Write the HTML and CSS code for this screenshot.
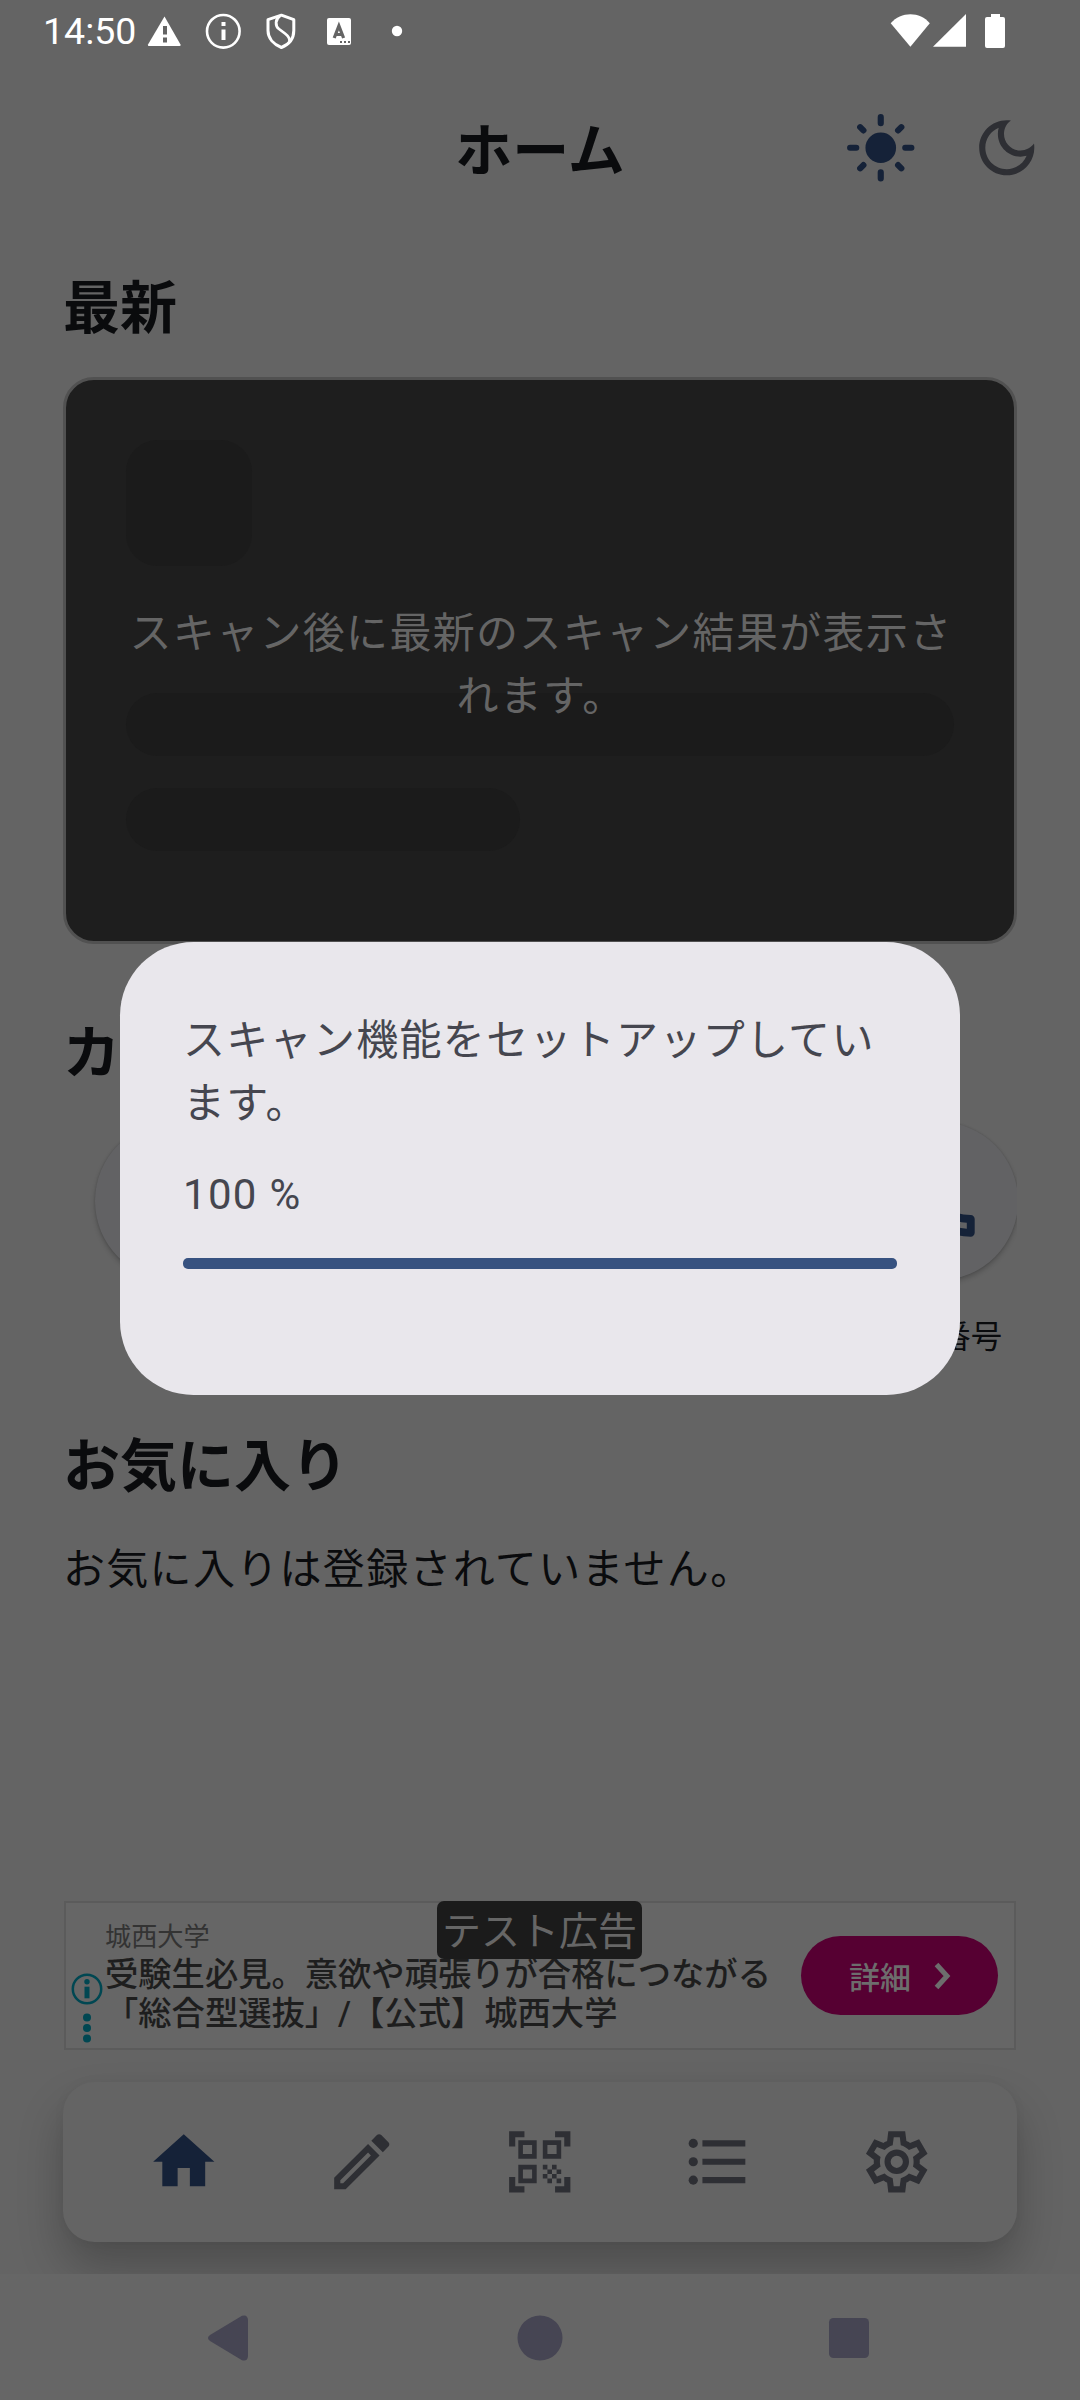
FILE: index.html
```html
<!DOCTYPE html>
<html lang="ja">
<head>
<meta charset="utf-8">
<title>ホーム</title>
<link rel="stylesheet" href="styles.css">
</head>
<body>
<div class="screen">
  <div class="status">
    <span class="clock">14:50</span>
    <svg class="status-left" width="264" height="62" viewBox="0 0 264 62">
      <path d="M20.500 16.500L36.500 44.500Q37 46 35.500 46H5Q3.500 46 4 44.500Z" fill="#fff"/>
      <path d="M19 26h4v8.500h-4zM19 37.500h4v5h-4z" fill="#646464"/>
      <circle cx="79.300" cy="31.300" r="16.300" fill="none" stroke="#fff" stroke-width="2.600"/>
      <path d="M77.500 22h4v4h-4zM77.500 29.500h4v10.500h-4z" fill="#fff"/>
      <path d="M137.400 15.200L149.800 19.700V30.500C149.800 38.500 145 44.500 137.400 47.500C129.800 44.500 124 38.500 124 30.500V19.700Z" fill="none" stroke="#fff" stroke-width="3" stroke-linejoin="round"/>
      <path d="M136 16C131 19 131 26 135 29L141 33.500C145 36.500 146 39 145.500 42" fill="none" stroke="#fff" stroke-width="2.800"/>
      <rect x="183" y="18" width="24" height="27" rx="2" fill="#fff"/>
      <path d="M190.200 38L194.900 26L199.600 38M192 34.500h6" fill="none" stroke="#646464" stroke-width="3.200"/>
      <path d="M196 41h2v2h-2zM200 41h2v2h-2zM204 41h2v2h-2z" fill="#646464"/>
      <circle cx="253" cy="31" r="5.200" fill="#fff"/>
    </svg>
    <svg class="status-right" width="116" height="62" viewBox="0 0 116 62">
      <path d="M0.700 23.300C11 11.300 30 11.300 39.800 23.300L20.400 46.800Z" fill="#fff"/>
      <path d="M43 46.800L76 14V46.800Z" fill="#fff"/>
      <path d="M101 14h9v3h3q2 0 2 2v27q0 2-2 2h-16q-2 0-2-2v-27q0-2 2-2h4z" fill="#fff"/>
    </svg>
  </div>

  <header class="appbar">
    <h1 class="title">ホーム</h1>
    <div class="modes">
      <svg class="icon navy" viewBox="0 0 24 24"><circle cx="12" cy="12" r="5"/><path d="M12 2v2M12 20v2M2 12h2M20 12h2M5.280 5.280l1.060 1.060M17.660 17.660l1.060 1.060M18.720 5.280l-1.060 1.060M6.340 17.660l-1.060 1.060" fill="none" stroke="currentColor" stroke-width="2" stroke-linecap="round"/></svg>
      <svg class="icon" viewBox="0 0 24 24"><path d="M9.370 5.510C9.190 6.150 9.100 6.820 9.100 7.500c0 4.080 3.320 7.400 7.400 7.400.68 0 1.350-.09 1.990-.27C17.450 17.190 14.930 19 12 19c-3.860 0-7-3.140-7-7 0-2.930 1.810-5.450 4.370-6.490zM12 3c-4.970 0-9 4.030-9 9s4.030 9 9 9 9-4.030 9-9c0-.46-.04-.92-.1-1.360-.98 1.370-2.580 2.260-4.400 2.260-2.980 0-5.400-2.420-5.400-5.400 0-1.810.89-3.420 2.260-4.400C12.920 3.040 12.460 3 12 3z"/></svg>
    </div>
  </header>

  <main class="content">
    <section class="latest">
      <h2 class="heading">最新</h2>
      <div class="card">
        <div class="bone square"></div>
        <div class="bone"></div>
        <div class="bone short"></div>
        <p class="card-text">スキャン後に最新のスキャン結果が表示されます。</p>
      </div>
    </section>

    <section class="categories">
      <h2 class="heading">カ</h2>
      <div class="category-row">
        <div class="category"><div class="disc"></div></div>
        <div class="category">
          <div class="disc"><svg class="phone" viewBox="0 0 24 24"><path d="M6.540 5c.06.89.21 1.760.45 2.590l-1.200 1.200c-.41-1.200-.67-2.470-.76-3.790h1.510m9.860 12.020c.85.24 1.720.39 2.600.45v1.490c-1.320-.09-2.590-.35-3.800-.75l1.200-1.190M7.500 3H4c-.55 0-1 .45-1 1 0 9.390 7.610 17 17 17 .55 0 1-.45 1-1v-3.490c0-.55-.45-1-1-1-1.240 0-2.450-.2-3.570-.57-.1-.04-.21-.05-.31-.05-.26 0-.51.1-.71.290l-2.200 2.200c-2.830-1.450-5.150-3.760-6.590-6.590l2.200-2.200c.28-.28.36-.67.25-1.020C8.700 6.450 8.500 5.250 8.500 4c0-.55-.45-1-1-1z"/></svg></div>
          <span class="category-label">電話番号</span>
        </div>
      </div>
    </section>

    <section class="favorites">
      <h2 class="heading">お気に入り</h2>
      <p class="empty">お気に入りは登録されていません。</p>
    </section>
  </main>

  <aside class="ad">
    <div class="ad-marks">
      <svg width="34" height="72" viewBox="0 0 34 72"><circle cx="17" cy="17" r="14.200" fill="none" stroke="#004752" stroke-width="2.500"/><circle cx="17" cy="9.700" r="2.700"/><path d="M14.500 14.700h5v11.600h-5z"/><circle cx="17" cy="45.500" r="4"/><circle cx="17" cy="56" r="4"/><circle cx="17" cy="66.500" r="4"/></svg>
    </div>
    <div class="ad-copy">
      <span class="advertiser">城西大学</span>
      <p class="ad-title">受験生必見。意欲や頑張りが合格につながる<br>「総合型選抜」/【公式】城西大学</p>
    </div>
    <div class="cta">詳細<svg width="18" height="28" viewBox="0 0 18 28"><path d="M2.500 2.500L13 14L2.500 25.500" fill="none" stroke="currentColor" stroke-width="5"/></svg></div>
    <span class="test-badge">テスト広告</span>
  </aside>

  <div class="dock-area">
    <nav class="dock">
      <svg class="icon navy" viewBox="0 0 24 24"><path d="M10 20v-6h4v6h5v-8h3L12 3 2 12h3v8z"/></svg>
      <svg class="icon" viewBox="0 0 24 24"><path d="M14.060 9.020l.92.920L5.920 19H5v-.92l9.060-9.060M17.660 3c-.25 0-.51.1-.7.290l-1.830 1.830 3.750 3.750 1.830-1.830c.39-.39.39-1.020 0-1.410l-2.340-2.340c-.2-.2-.45-.29-.71-.29zm-3.600 3.190L3 17.250V21h3.750L17.810 9.940l-3.750-3.750z"/></svg>
      <svg class="icon" viewBox="0 0 24 24"><path d="M9.500 6.500v3h-3v-3H9.500M11 5H5v6h6V5zM9.500 14.500v3h-3v-3H9.500M11 13H5v6h6V13zM17.500 6.500v3h-3v-3H17.500M19 5h-6v6h6V5zM13 13h1.500v1.500H13zM14.500 14.500H16V16h-1.500zM16 13h1.500v1.500H16zM13 16h1.500v1.500H13zM14.500 17.500H16V19h-1.500zM16 16h1.500v1.500H16zM17.500 14.500H19V16h-1.500zM17.500 17.500H19V19h-1.500zM22 7h-2V4h-3V2h5zM22 22v-5h-2v3h-3v2zM2 22h5v-2H4v-3H2zM2 2v5h2V4h3V2z"/></svg>
      <svg class="icon" viewBox="0 0 24 24"><circle cx="4" cy="6" r="1.500"/><circle cx="4" cy="12" r="1.500"/><circle cx="4" cy="18" r="1.500"/><path d="M7 5h14v2H7zM7 11h14v2H7zM7 17h14v2H7z"/></svg>
      <svg class="icon" viewBox="0 -960 960 960"><path d="m370-80-16-128q-13-5-24.500-12T307-235l-119 50L78-375l103-78q-1-7-1-13.500v-27q0-6.500 1-13.500L78-585l110-190 119 50q11-8 23-15t24-12l16-128h220l16 128q13 5 24.500 12t22.500 15l119-50 110 190-103 78q1 7 1 13.500v27q0 6.500-2 13.500l103 78-110 190-118-50q-11 8-23 15t-24 12L590-80H370Zm70-80h79l14-106q31-8 57.500-23.500T639-327l99 41 39-68-86-65q5-14 7-29.500t2-31.500q0-16-2-31.500t-7-29.500l86-65-39-68-99 42q-22-23-48.500-38.500T533-694l-13-106h-79l-14 106q-31 8-57.500 23.500T321-633l-99-41-39 68 86 64q-5 15-7 30t-2 32q0 16 2 31t7 30l-86 65 39 68 99-42q22 23 48.500 38.500T427-266l13 106Z"/><circle cx="480" cy="-480" r="120" fill="none" stroke="currentColor" stroke-width="80"/></svg>
    </nav>
  </div>

  <div class="system-nav">
    <svg width="46" height="46" viewBox="0 0 46 46"><path d="M35 0.800Q40.500-1 41 5V41Q40.500 47 35 45.200L3 26Q-1 23 3 20Z"/></svg>
    <svg width="46" height="46" viewBox="0 0 46 46"><circle cx="23" cy="23" r="22.500"/></svg>
    <svg width="46" height="46" viewBox="0 0 46 46"><rect x="3" y="3" width="40" height="40" rx="4.500"/></svg>
  </div>

  <div class="dialog">
    <p class="message">スキャン機能をセットアップしています。</p>
    <p class="percent">100 %</p>
    <div class="progress"><div class="progress-fill"></div></div>
  </div>
</div>
</body>
</html>
```
FILE: styles.css
```css
* { box-sizing: border-box; margin: 0; padding: 0; }

body {
  width: 1080px;
  height: 2400px;
  overflow: hidden;
  font-family: Roboto, "Noto Sans CJK JP", sans-serif;
  background: #646464;
}

svg { display: block; flex: none; fill: currentColor; }

.screen {
  position: relative;
  display: flex;
  flex-direction: column;
  width: 1080px;
  height: 2400px;
  overflow: hidden;
  color: #0a0b0d;
}

.status { display: flex; height: 63px; padding-left: 43px; color: #fff; }
.clock { width: 101px; font-size: 37.5px; line-height: 62px; white-space: nowrap; }
.status-right { margin-left: auto; margin-right: 74px; }

.appbar {
  position: relative;
  display: flex;
  justify-content: flex-end;
  align-items: center;
  height: 170px;
  padding-right: 37px;
}
.title {
  position: absolute;
  left: 0;
  right: 0;
  top: 52px;
  text-align: center;
  font-size: 57px;
  line-height: 74px;
  font-weight: 700;
}
.modes { display: flex; gap: 52.5px; }
.icon { width: 73.5px; height: 73.5px; color: #2e2f34; }
.navy { color: #152238; }

.content { display: flex; flex-direction: column; height: 1668px; padding: 0 63px; }
.heading { font-size: 57px; line-height: 74px; font-weight: 700; }
.latest { padding-top: 39px; }
.card {
  position: relative;
  display: flex;
  flex-direction: column;
  height: 567px;
  margin-top: 31px;
  padding: 60px;
  border: 3px solid #515151;
  border-radius: 31px;
  background: #1e1e1e;
}
.bone { flex: none; height: 63px; margin-bottom: 32px; border-radius: 31.5px; background: #1b1b1b; }
.square { width: 126px; height: 126px; margin-bottom: 127px; }
.short { width: 394px; }
.card-text {
  position: absolute;
  left: 61px;
  right: 59px;
  top: 222px;
  text-align: center;
  color: #656565;
  font-size: 42px;
  line-height: 63px;
  letter-spacing: 1.31px;
}

.categories { padding-top: 73px; }
.category-row {
  display: flex;
  justify-content: space-between;
  height: 290px;
  margin-top: 12px;
  padding: 19px 0 0 32px;
  overflow: hidden;
}
.category { display: flex; flex-direction: column; align-items: center; }
.category:last-child { margin-right: -1px; }
.disc {
  display: flex;
  align-items: center;
  justify-content: center;
  width: 157.5px;
  height: 157.5px;
  border-radius: 50%;
  background: #626264;
  box-shadow: 0 3px 5px rgba(0, 0, 0, 0.2), 0 0 2px rgba(0, 0, 0, 0.15);
}
.phone { width: 94.5px; height: 94.5px; color: #152238; }
.category-label { margin-top: 34px; font-size: 31.5px; line-height: 47px; white-space: nowrap; }

.favorites { padding-top: 37px; }
.empty { margin-top: 34px; font-size: 42px; line-height: 63px; letter-spacing: 1.31px; }

.ad {
  position: relative;
  display: flex;
  height: 149px;
  margin: 0 64px;
  padding-right: 16px;
  border: 2px solid #5b5b5b;
  background: #666;
  color: #1e1e1e;
}
.ad-marks { width: 39px; padding: 69px 0 0 3.5px; color: #004752; }
.advertiser { display: block; margin-top: 15px; font-size: 26.2px; line-height: 38px; color: #333; }
.ad-title { margin-top: -1px; font-size: 33.3px; line-height: 39px; font-weight: 500; white-space: nowrap; }
.cta {
  display: flex;
  align-items: center;
  gap: 23px;
  width: 197px;
  height: 79px;
  margin: 33px 0 0 auto;
  padding-left: 48px;
  border-radius: 40px;
  background: #560032;
  color: #6d6d6d;
  font-size: 31px;
  font-weight: 500;
}
.test-badge {
  position: absolute;
  left: 371px;
  top: -2px;
  width: 205px;
  height: 58px;
  border-radius: 7px;
  background: #1b1b1b;
  color: #666;
  font-size: 39px;
  line-height: 62px;
  text-align: center;
}

.dock-area { height: 224px; padding: 32px 63px; overflow: hidden; }
.dock {
  display: flex;
  align-items: center;
  justify-content: space-between;
  height: 160px;
  padding: 0 84px;
  border-radius: 31.5px;
  background: #646464;
  box-shadow: 0 26px 46px rgba(0, 0, 0, 0.23), 0 0 12px rgba(0, 0, 0, 0.04);
}

.system-nav {
  display: flex;
  align-items: center;
  justify-content: space-between;
  height: 126px;
  padding: 2px 208px 0 207px;
  background: #666;
  color: #464553;
}

.dialog {
  position: absolute;
  left: 120px;
  top: 942px;
  display: flex;
  flex-direction: column;
  width: 840px;
  height: 453px;
  padding: 67px 63px 63px;
  border-radius: 73.5px;
  background: #e9e7ec;
  color: #45464f;
  font-size: 42px;
  line-height: 63px;
  letter-spacing: 1.31px;
}
.percent { margin-top: 28px; }
.progress { height: 10.5px; margin-top: 32px; border-radius: 5px; overflow: hidden; }
.progress-fill { width: 100%; height: 100%; background: #375280; }
```
